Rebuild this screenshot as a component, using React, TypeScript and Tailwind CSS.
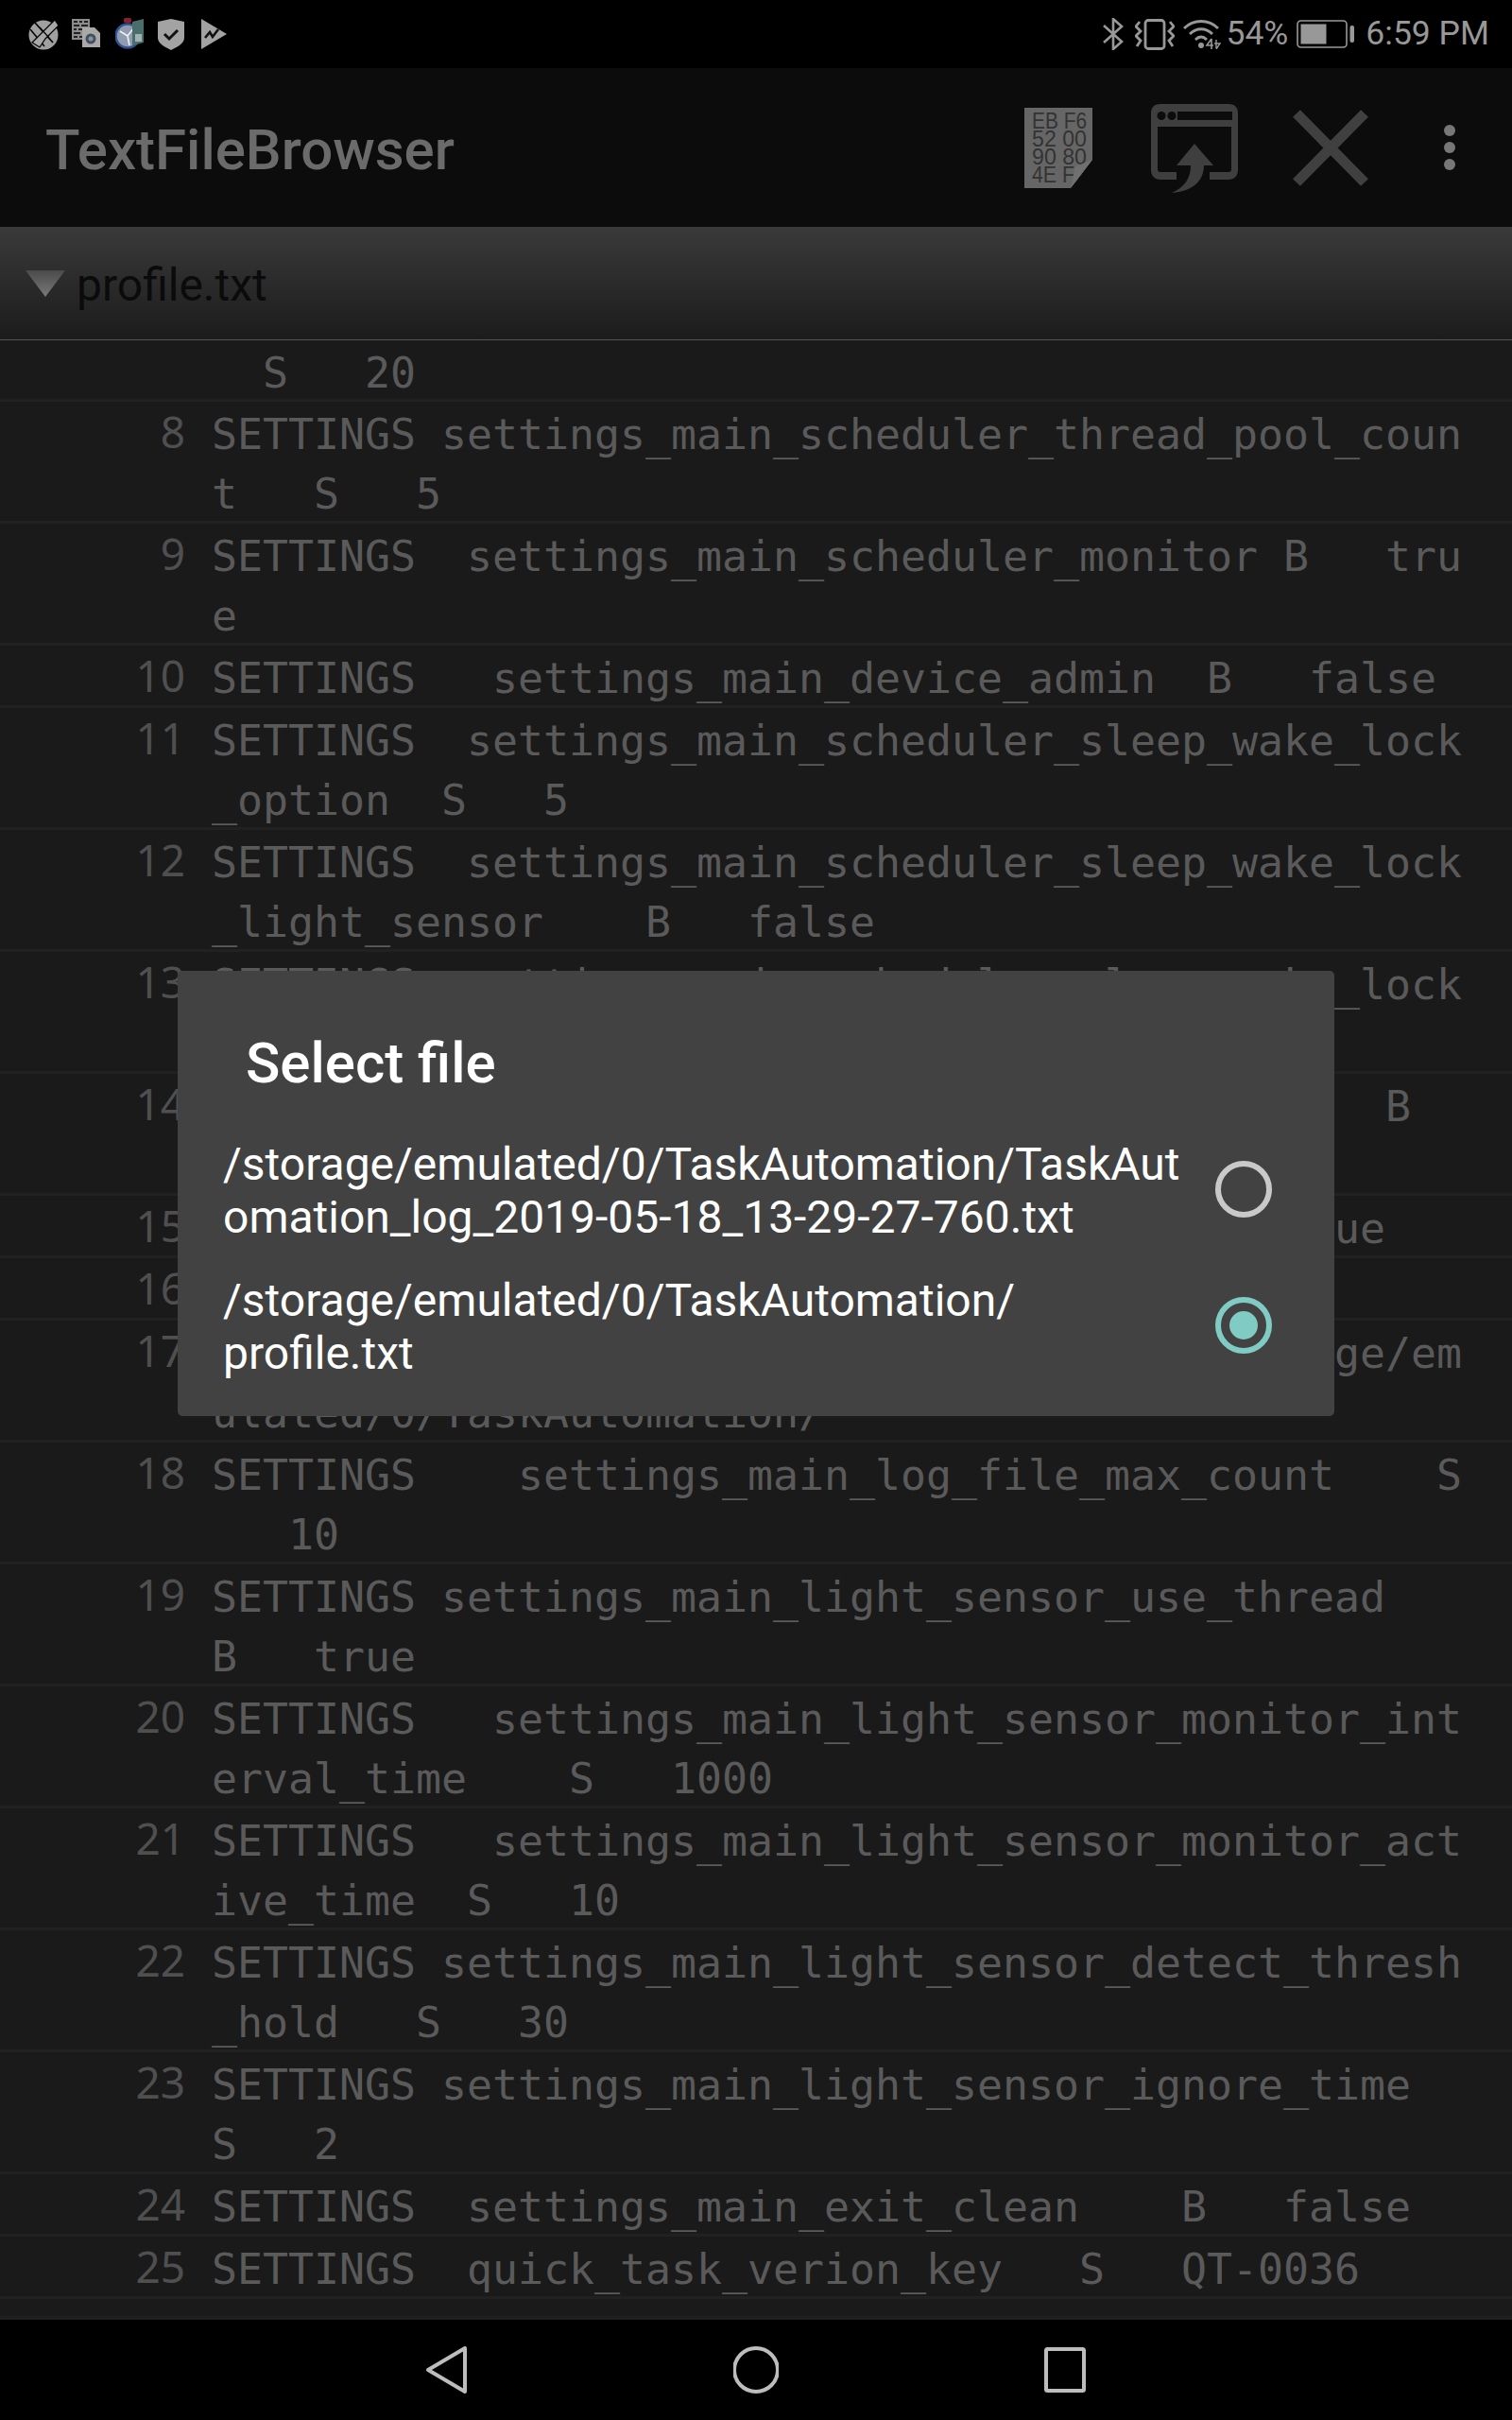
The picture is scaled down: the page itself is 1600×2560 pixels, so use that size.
import React from "react";

const rows: { n: string; lines: string[] }[] = [
  { n: "8", lines: ["SETTINGS settings_main_scheduler_thread_pool_coun", "t   S   5"] },
  { n: "9", lines: ["SETTINGS  settings_main_scheduler_monitor B   tru", "e"] },
  { n: "10", lines: ["SETTINGS   settings_main_device_admin  B   false"] },
  { n: "11", lines: ["SETTINGS  settings_main_scheduler_sleep_wake_lock", "_option  S   5"] },
  { n: "12", lines: ["SETTINGS  settings_main_scheduler_sleep_wake_lock", "_light_sensor    B   false"] },
  { n: "13", lines: ["SETTINGS  settings_main_scheduler_sleep_wake_lock", " "] },
  { n: "14", lines: [" ".repeat(46) + "B", " "] },
  { n: "15", lines: [" ".repeat(44) + "ue"] },
  { n: "16", lines: [" "] },
  { n: "17", lines: [" ".repeat(44) + "ge/em", "ulated/0/TaskAutomation/"] },
  { n: "18", lines: ["SETTINGS    settings_main_log_file_max_count    S", "   10"] },
  { n: "19", lines: ["SETTINGS settings_main_light_sensor_use_thread", "B   true"] },
  { n: "20", lines: ["SETTINGS   settings_main_light_sensor_monitor_int", "erval_time    S   1000"] },
  { n: "21", lines: ["SETTINGS   settings_main_light_sensor_monitor_act", "ive_time  S   10"] },
  { n: "22", lines: ["SETTINGS settings_main_light_sensor_detect_thresh", "_hold   S   30"] },
  { n: "23", lines: ["SETTINGS settings_main_light_sensor_ignore_time", "S   2"] },
  { n: "24", lines: ["SETTINGS  settings_main_exit_clean    B   false"] },
  { n: "25", lines: ["SETTINGS  quick_task_verion_key   S   QT-0036"] },
];

function Row({ n, lines }: { n: string; lines: string[] }) {
  return (
    <div className="flex border-b-[3px] border-[#212121]">
      <div className="w-[196px] shrink-0 pt-[2px] text-right text-[46px] leading-[59px] text-[#4f4f4f] font-['Noto_Sans',sans-serif]">
        {n}
      </div>
      <div className="ml-[28px] font-['DejaVu_Sans_Mono',monospace] text-[44.85px] leading-[63px] text-[#5a5a5a]">
        {lines.map((l, i) => (
          <div key={i} className="h-[63px] whitespace-pre pt-[3px]">
            {l}
          </div>
        ))}
      </div>
    </div>
  );
}

function Radio({ on }: { on?: boolean }) {
  return (
    <div
      className={
        on
          ? "flex h-[60px] w-[60px] shrink-0 items-center justify-center rounded-full border-[6px] border-[#80cbc4]"
          : "flex h-[60px] w-[60px] shrink-0 items-center justify-center rounded-full border-[6px] border-[#c9c9c9]"
      }
    >
      {on && <div className="h-[30px] w-[30px] rounded-full bg-[#80cbc4]" />}
    </div>
  );
}

function ToolIcon() {
  return (
    <svg viewBox="0 0 32 33" className="h-[33px] w-[32px]">
      <circle cx="16" cy="17" r="15.5" fill="#a0a0a0" />
      <path d="M7 4 L26 25" stroke="#000" strokeWidth="1.8" />
      <path d="M2 11 L17 29" stroke="#000" strokeWidth="1.5" />
      <path d="M28 1 L32 7 L18 21 L12 30 L4 25 L11 18 Z" fill="#a8a8a8" stroke="#000" strokeWidth="1.2" />
      <path d="M12 9 L22 20" stroke="#000" strokeWidth="1.2" />
    </svg>
  );
}

function DocsIcon() {
  return (
    <svg viewBox="0 0 30 32" className="h-[32px] w-[30px]">
      <rect x="0" y="0" width="19" height="22" fill="#8c8c8c" />
      <path d="M2 3h4M8 3h3M13 3h4M2 7h6M10 7h7M2 11h3M7 11h5M14 11h3M2 15h7M11 15h5M2 19h4M8 19h4" stroke="#222" strokeWidth="2" />
      <path d="M11 9 H24 L30 15 V30 H11 Z" fill="#a9a9a9" />
      <circle cx="20" cy="21" r="5.5" fill="#44505c" />
      <circle cx="20" cy="21" r="2.5" fill="#8496a6" />
    </svg>
  );
}

function TimerIcon() {
  return (
    <svg viewBox="0 0 30 34" className="h-[34px] w-[30px]">
      <rect x="9" y="0" width="8" height="5" rx="1.5" fill="#8c1f28" />
      <circle cx="13" cy="19" r="12.5" fill="#8f9bb0" stroke="#33508f" strokeWidth="2.5" />
      <path d="M13 19 L5 14 M13 19 L20 10 M13 19 L15 29" stroke="#f0f0f0" strokeWidth="1.6" />
      <path d="M18 4 L30 1 V26 L18 29 Z" fill="#4b6d6b" />
      <rect x="21" y="17" width="7" height="8" fill="#a2b2b0" />
    </svg>
  );
}

function ShieldIcon() {
  return (
    <svg viewBox="0 0 28 33" className="h-[33px] w-[28px]">
      <path d="M14 0 L28 3 V20 C28 26 20 30 14 33 C8 30 0 26 0 20 V3 Z" fill="#a3a3a3" />
      <path d="M7 16 L12 21 L21 12" stroke="#111" strokeWidth="3" fill="none" />
    </svg>
  );
}

function PlayIcon() {
  return (
    <svg viewBox="0 0 27 32" className="h-[32px] w-[27px]">
      <path d="M0 0 L27 16 L0 32 Z" fill="#a3a3a3" />
      <path d="M4 20 L9 14 L12 19 L18 11" stroke="#111" strokeWidth="2.6" fill="none" />
    </svg>
  );
}

function BluetoothIcon() {
  return (
    <svg viewBox="0 0 22 34" className="h-[34px] w-[22px]">
      <path d="M1 8 L20 25 L11 33 V1 L20 9 L1 26" stroke="#989898" strokeWidth="2.6" fill="none" />
    </svg>
  );
}

function VibrateIcon() {
  return (
    <svg viewBox="0 0 42 33" className="h-[33px] w-[42px]">
      <rect x="11" y="1.5" width="20" height="30" rx="3" stroke="#989898" strokeWidth="2.8" fill="none" />
      <path d="M5 3 L1 8 L6 13 L1 18 L6 23 L2 29" stroke="#989898" strokeWidth="2.8" fill="none" />
      <path d="M37 3 L41 8 L36 13 L41 18 L36 23 L40 29" stroke="#989898" strokeWidth="2.8" fill="none" />
    </svg>
  );
}

function WifiIcon() {
  return (
    <svg viewBox="0 0 40 32" className="h-[32px] w-[40px]">
      <path d="M1 10 C11 0 27 0 37 10" stroke="#989898" strokeWidth="2.8" fill="none" />
      <path d="M7 16 C14 9 24 9 31 16" stroke="#989898" strokeWidth="2.8" fill="none" />
      <path d="M13 22 C17 18 21 18 25 22" stroke="#989898" strokeWidth="2.8" fill="none" />
      <circle cx="19" cy="28" r="3" fill="#989898" />
      <path d="M30 21 L25 28 H32 M30 21 V32" stroke="#989898" strokeWidth="1.6" fill="none" />
      <path d="M35 22 V31 M35 32 L39 26 H33" stroke="#989898" strokeWidth="1.4" fill="none" />
    </svg>
  );
}

function BatteryIcon() {
  return (
    <svg viewBox="0 0 62 30" className="h-[30px] w-[62px]">
      <rect x="1" y="1" width="52" height="28" rx="3.5" stroke="#989898" strokeWidth="1.6" fill="none" />
      <rect x="4.5" y="4.5" width="27" height="21" fill="#989898" />
      <rect x="56.5" y="6" width="4.5" height="18" rx="2" fill="#989898" />
    </svg>
  );
}

function HexDocIcon() {
  const t = ["EB F6", "52 00", "90 80", "4E FF"];
  return (
    <svg viewBox="0 0 72 85" className="h-[85px] w-[72px]">
      <path d="M0 0 H72 V55 L49 85 H0 Z" fill="#666666" />
      {t.map((s, i) => (
        <text
          key={s}
          x="8"
          y={22 + i * 19}
          fontFamily="'Liberation Sans', sans-serif"
          fontSize="24"
          fill="#333333"
          textLength="58"
          lengthAdjust="spacingAndGlyphs"
        >
          {s}
        </text>
      ))}
      <path d="M73 55 L73 86 L49 86 Z" fill="#0c0c0c" />
      <path d="M72 55 L49 85 L54 62 Z" fill="#707070" />
    </svg>
  );
}

function ShareWindowIcon() {
  return (
    <svg viewBox="0 0 96 96" className="h-[96px] w-[96px]">
      <path d="M29 82 H12 C6 82 2 78 2 72 V12 C2 5 6 2 12 2 H84 C90 2 94 5 94 12 V72 C94 78 90 82 84 82 H64 V74 H84 C86 74 87 73 87 71 V26 H9 V71 C9 73 10 74 12 74 H29 Z" fill="#3f3f3f" />
      <rect x="30" y="10" width="58" height="9" fill="#0c0c0c" />
      <circle cx="13" cy="14.5" r="4.5" fill="#0c0c0c" />
      <circle cx="24" cy="14.5" r="4.5" fill="#0c0c0c" />
      <path d="M48 44 L68 67 H58 C58 82 48 94 24 96 C38 90 44 80 44 67 H29 Z" fill="#3f3f3f" />
    </svg>
  );
}

function CloseIcon() {
  return (
    <svg viewBox="0 0 80 81" className="h-[81px] w-[80px]">
      <path d="M4 4 L76 77 M76 4 L4 77" stroke="#404040" strokeWidth="11" fill="none" />
    </svg>
  );
}

export default function App() {
  return (
    <div className="relative flex h-[2560px] w-[1600px] flex-col overflow-hidden bg-black font-['Roboto',sans-serif]">
      {/* status bar */}
      <div className="flex h-[72px] shrink-0 items-center justify-between bg-black pl-[30px] pr-[24px]">
        <div className="flex items-center">
          <ToolIcon />
          <div className="ml-[14px]"><DocsIcon /></div>
          <div className="ml-[16px]"><TimerIcon /></div>
          <div className="ml-[15px]"><ShieldIcon /></div>
          <div className="ml-[18px]"><PlayIcon /></div>
        </div>
        <div className="flex items-center text-[35.5px] text-[#989898]">
          <BluetoothIcon />
          <div className="ml-[12px]"><VibrateIcon /></div>
          <div className="ml-[9px]"><WifiIcon /></div>
          <span className="ml-[5px]">54%</span>
          <div className="ml-[9px]"><BatteryIcon /></div>
          <span className="ml-[11px]">6:59 PM</span>
        </div>
      </div>

      {/* app bar */}
      <div className="flex h-[168px] shrink-0 items-center bg-[#0c0c0c] pl-[48px]">
        <div className="pt-[5px] text-[60px] font-medium text-[#6b6b6b]">TextFileBrowser</div>
        <div className="ml-auto flex items-center">
          <HexDocIcon />
          <div className="ml-[60px]"><ShareWindowIcon /></div>
          <div className="ml-[56px]"><CloseIcon /></div>
          <div className="ml-[80px] mr-[60px] flex flex-col gap-[6px]">
            <div className="h-[12px] w-[12px] rounded-full bg-[#777777]" />
            <div className="h-[12px] w-[12px] rounded-full bg-[#777777]" />
            <div className="h-[12px] w-[12px] rounded-full bg-[#777777]" />
          </div>
        </div>
      </div>

      {/* tab header */}
      <div className="flex h-[120px] shrink-0 items-center border-b border-[#555555] bg-linear-to-b from-[#3a3a3a] to-[#1c1c1c] pl-[27px]">
        <svg viewBox="0 0 42 28" className="h-[28px] w-[42px]">
          <defs>
            <linearGradient id="tri" x1="0" y1="0" x2="0" y2="1">
              <stop offset="0" stopColor="#4a4a4a" />
              <stop offset="1" stopColor="#7a7a7a" />
            </linearGradient>
          </defs>
          <path d="M0 0 H42 L21 28 Z" fill="url(#tri)" />
        </svg>
        <span className="ml-[12px] pt-[5px] text-[48px] text-[#0b0b0b]">profile.txt</span>
      </div>

      {/* list */}
      <div className="min-h-0 flex-1 overflow-hidden border-b-[4px] border-[#1f1f1f] bg-[#1a1a1a]">
        <div className="h-[65px] border-b-[3px] border-[#212121] pl-[224px] pt-[3px] font-['DejaVu_Sans_Mono',monospace] text-[44.85px] leading-[63px] text-[#5a5a5a] whitespace-pre">
          {"  S   20"}
        </div>
        {rows.map((r) => (
          <Row key={r.n} n={r.n} lines={r.lines} />
        ))}
      </div>

      {/* nav bar */}
      <div className="flex h-[106px] shrink-0 items-center justify-center gap-[280px] bg-black">
        <svg viewBox="0 0 48 52" className="h-[52px] w-[48px]">
          <path d="M44 3 V49 L5 26 Z" stroke="#bdbdbd" strokeWidth="4" strokeLinejoin="round" fill="none" />
        </svg>
        <svg viewBox="0 0 48 52" className="h-[52px] w-[48px]">
          <circle cx="24" cy="26" r="23" stroke="#bdbdbd" strokeWidth="4" fill="none" />
        </svg>
        <svg viewBox="0 0 48 52" className="h-[52px] w-[48px]">
          <rect x="3" y="4" width="40" height="44" rx="1.5" stroke="#bdbdbd" strokeWidth="4" fill="none" />
        </svg>
      </div>

      {/* dialog */}
      <div className="absolute left-[188px] top-[1027px] w-[1224px] rounded-[5px] bg-[#424242] pb-[24px] text-white">
        <div className="h-[159px] pl-[72px] pt-[66px] text-[60px] font-medium leading-[64px]">Select file</div>
        <div className="flex h-[144px] items-center justify-between pl-[48px] pr-[66px] text-[48px] leading-[56px]">
          <div className="pt-[3px]">
            <div>/storage/emulated/0/TaskAutomation/TaskAut</div>
            <div>omation_log_2019-05-18_13-29-27-760.txt</div>
          </div>
          <Radio />
        </div>
        <div className="flex h-[144px] items-center justify-between pl-[48px] pr-[66px] text-[48px] leading-[56px]">
          <div className="pt-[3px]">
            <div>/storage/emulated/0/TaskAutomation/</div>
            <div>profile.txt</div>
          </div>
          <Radio on />
        </div>
      </div>
    </div>
  );
}
